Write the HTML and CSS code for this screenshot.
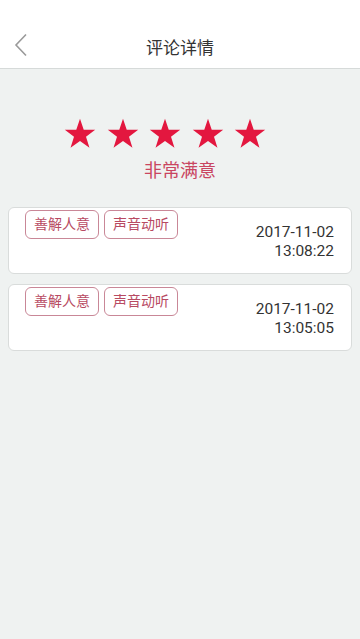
FILE: index.html
```html
<!DOCTYPE html>
<html lang="zh">
<head>
<meta charset="utf-8">
<link rel="stylesheet" href="styles.css">
</head>
<body>
<header class="topbar">
  <svg class="back" width="14" height="24" viewBox="0 0 14 24"><path d="M12 1.5 L2 12 L12 22.5" fill="none" stroke="#9a9a9a" stroke-width="1.6"/></svg>
  <div class="title">评论详情</div>
</header>
<section class="rating">
  <div class="stars">
    <svg class="star" viewBox="0 0 24 23"><polygon points="12,0.5 14.8,8.6 23.4,8.7 16.5,13.9 19.1,22.2 12,17.2 4.9,22.2 7.5,13.9 0.6,8.7 9.2,8.6"/></svg>
    <svg class="star" viewBox="0 0 24 23"><polygon points="12,0.5 14.8,8.6 23.4,8.7 16.5,13.9 19.1,22.2 12,17.2 4.9,22.2 7.5,13.9 0.6,8.7 9.2,8.6"/></svg>
    <svg class="star" viewBox="0 0 24 23"><polygon points="12,0.5 14.8,8.6 23.4,8.7 16.5,13.9 19.1,22.2 12,17.2 4.9,22.2 7.5,13.9 0.6,8.7 9.2,8.6"/></svg>
    <svg class="star" viewBox="0 0 24 23"><polygon points="12,0.5 14.8,8.6 23.4,8.7 16.5,13.9 19.1,22.2 12,17.2 4.9,22.2 7.5,13.9 0.6,8.7 9.2,8.6"/></svg>
    <svg class="star" viewBox="0 0 24 23"><polygon points="12,0.5 14.8,8.6 23.4,8.7 16.5,13.9 19.1,22.2 12,17.2 4.9,22.2 7.5,13.9 0.6,8.7 9.2,8.6"/></svg>
  </div>
  <div class="verdict">非常满意</div>
</section>
<main class="list">
  <div class="card">
    <div class="tags">
      <span class="tag">善解人意</span>
      <span class="tag">声音动听</span>
    </div>
    <div class="date">2017-11-02<br>13:08:22</div>
  </div>
  <div class="card">
    <div class="tags">
      <span class="tag">善解人意</span>
      <span class="tag">声音动听</span>
    </div>
    <div class="date">2017-11-02<br>13:05:05</div>
  </div>
</main>
</body>
</html>
```

FILE: styles.css
```css
html, body {
  margin: 0;
  padding: 0;
}
body {
  width: 360px;
  min-height: 639px;
  background: #eff2f1;
  font-family: Roboto, "Noto Sans CJK SC", sans-serif;
  color: #333;
}
.topbar {
  position: relative;
  height: 44px;
  padding-top: 24px;
  background: #fff;
  border-bottom: 1px solid #d6dad9;
  display: flex;
  align-items: center;
  justify-content: center;
}
.back {
  position: absolute;
  left: 14px;
  top: 33px;
}
.title {
  font-size: 17px;
  color: #333;
}
.rating {
  padding-top: 49px;
  display: flex;
  flex-direction: column;
  align-items: center;
}
.stars {
  display: flex;
  gap: 10.5px;
  height: 31px;
  margin-right: 30px;
}
.star {
  width: 32px;
  height: 31px;
  fill: #e3173f;
}
.verdict {
  margin-top: 10px;
  font-size: 18px;
  line-height: 24px;
  color: #c94560;
}
.list {
  margin-top: 24px;
  padding: 0 8px;
  display: flex;
  flex-direction: column;
  gap: 10px;
}
.card {
  height: 63px;
  background: #fff;
  border: 1px solid #d9dcdb;
  border-radius: 6px;
  display: flex;
  justify-content: space-between;
  padding: 2px 17px 0 16px;
}
.tags {
  display: flex;
  gap: 5px;
  align-items: flex-start;
}
.tag {
  height: 27px;
  line-height: 27px;
  padding: 0 8px;
  font-size: 14px;
  color: #b84a62;
  border: 1px solid #c98797;
  border-radius: 6px;
}
.date {
  margin-top: 13px;
  font-size: 15.5px;
  line-height: 19px;
  text-align: right;
  color: #333;
}
```
